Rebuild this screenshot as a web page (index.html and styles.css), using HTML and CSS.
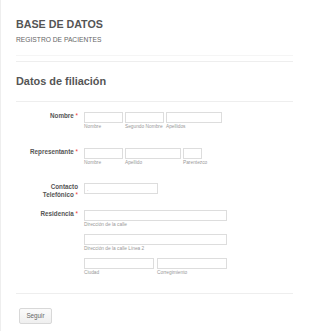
FILE: index.html
```html
<!DOCTYPE html>
<html lang="es">
<head>
    <meta charset="UTF-8">
    <meta name="viewport" content="width=device-width, initial-scale=1.0">
    <title>Base de datos</title>
    <link rel="stylesheet" href="styles.css">
</head>
<body>

    <div class="form-all">
        <div class="form-header">
            <div class="form-title">BASE DE DATOS</div>
            <div class="form-subtitle">REGISTRO DE PACIENTES</div>
        </div>

        <div class="form-section">
            <h2 class="section-title">Datos de filiación</h2>

            <div class="form-line line-nombre">
                <label class="form-label">Nombre <span class="required">*</span></label>
                <div class="form-inputs">
                    <div class="sub">
                        <input type="text" class="w-39">
                        <span class="sublabel">Nombre</span>
                    </div>
                    <div class="sub">
                        <input type="text" class="w-39">
                        <span class="sublabel">Segundo Nombre</span>
                    </div>
                    <div class="sub">
                        <input type="text" class="w-56">
                        <span class="sublabel">Apellidos</span>
                    </div>
                </div>
            </div>

            <div class="form-line line-repre">
                <label class="form-label">Representante <span class="required">*</span></label>
                <div class="form-inputs">
                    <div class="sub">
                        <input type="text" class="w-39">
                        <span class="sublabel">Nombre</span>
                    </div>
                    <div class="sub">
                        <input type="text" class="w-56">
                        <span class="sublabel">Apellido</span>
                    </div>
                    <div class="sub">
                        <input type="text" class="w-19">
                        <span class="sublabel">Parentezco</span>
                    </div>
                </div>
            </div>

            <div class="form-line line-contacto">
                <label class="form-label">Contacto<br>Telefónico <span class="required">*</span></label>
                <div class="form-inputs">
                    <input type="text" class="w-74 phone" value=".">
                </div>
            </div>

            <div class="form-line line-residencia">
                <label class="form-label">Residencia <span class="required">*</span></label>
                <div class="form-inputs address">
                    <div class="sub">
                        <input type="text" class="w-143">
                        <span class="sublabel">Dirección de la calle</span>
                    </div>
                    <div class="sub">
                        <input type="text" class="w-143">
                        <span class="sublabel">Dirección de la calle Línea 2</span>
                    </div>
                    <div class="addr-pair">
                        <div class="sub">
                            <input type="text" class="w-70">
                            <span class="sublabel">Ciudad</span>
                        </div>
                        <div class="sub">
                            <input type="text" class="w-70">
                            <span class="sublabel">Corregimiento</span>
                        </div>
                    </div>
                </div>
            </div>
        </div>

        <div class="form-buttons">
            <button type="button" class="btn">Seguir</button>
        </div>
    </div>

</body>
</html>
```

FILE: styles.css
```css
body {
    margin: 0;
    font-family: "Liberation Sans", Arial, sans-serif;
    background-color: #fff;
    color: #555;
}

.form-all {
    width: 277px;
    padding: 0 17px 0 15px;
    border-left: 1px solid #eee;
    border-bottom: 1px solid #f0f0f0;
}

.form-header {
    padding: 18px 0 11px;
    border-bottom: 1px solid #f5f5f5;
}

.form-title {
    font-size: 10.7px;
    line-height: 12px;
    font-weight: bold;
    color: #555;
}

.form-subtitle {
    margin-top: 6px;
    font-size: 6.7px;
    line-height: 8px;
    color: #666;
}

.form-section {
    margin-top: 5px;
    border-top: 1px solid #eee;
}

.section-title {
    margin: 0;
    padding: 12px 0 13px;
    font-size: 10.9px;
    line-height: 14px;
    font-weight: bold;
    color: #555;
    border-bottom: 1px solid #eee;
}

.form-line {
    display: flex;
    gap: 6px;
}

.line-nombre {
    margin-top: 10px;
}

.line-repre {
    margin-top: 18px;
}

.line-contacto {
    margin-top: 17px;
}

.line-residencia {
    margin-top: 11px;
}

.form-label {
    width: 62px;
    flex-shrink: 0;
    text-align: right;
    font-size: 6.3px;
    line-height: 8px;
    font-weight: bold;
    color: #555;
}

.required {
    color: #e33;
    font-weight: normal;
}

.form-inputs {
    display: flex;
    gap: 2px;
}

.sub {
    display: flex;
    flex-direction: column;
}

input {
    box-sizing: border-box;
    height: 11px;
    margin: 0;
    padding: 0 2px;
    border: 1px solid #ddd;
    border-radius: 0;
    background: #fff;
    font-family: inherit;
    font-size: 5px;
    color: #999;
}

.w-19 { width: 19px; }
.w-39 { width: 39px; }
.w-56 { width: 56px; }
.w-70 { width: 70px; }
.w-74 { width: 74px; }
.w-143 { width: 143px; }

.sublabel {
    font-size: 4.8px;
    line-height: 7px;
    color: #999;
    white-space: nowrap;
}

.address {
    flex-direction: column;
    gap: 6px;
}

.addr-pair {
    display: flex;
    gap: 3px;
}

.form-buttons {
    margin-top: 17px;
    padding: 10px 0 10px 3px;
    border-top: 1px solid #eee;
}

.btn {
    width: 33px;
    height: 16px;
    padding: 0;
    border: 1px solid #d8d8d8;
    border-radius: 2px;
    background: linear-gradient(#fbfbfb, #efefef);
    font-family: inherit;
    font-size: 6.3px;
    color: #666;
}
```
